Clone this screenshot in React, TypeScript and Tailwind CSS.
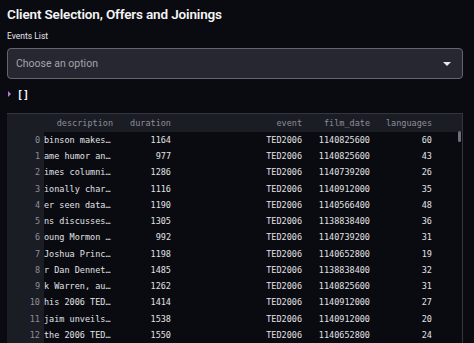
import React from 'react';

const rows: [string, string, string, string, string][] = [
  ['binson makes…', '1164', 'TED2006', '1140825600', '60'],
  ['ame humor an…', '977', 'TED2006', '1140825600', '43'],
  ['imes columni…', '1286', 'TED2006', '1140739200', '26'],
  ['ionally char…', '1116', 'TED2006', '1140912000', '35'],
  ['er seen data…', '1190', 'TED2006', '1140566400', '48'],
  ['ns discusses…', '1305', 'TED2006', '1138838400', '36'],
  ['oung Mormon …', '992', 'TED2006', '1140739200', '31'],
  ['Joshua Princ…', '1198', 'TED2006', '1140652800', '19'],
  ['r Dan Dennet…', '1485', 'TED2006', '1138838400', '32'],
  ['k Warren, au…', '1262', 'TED2006', '1140825600', '31'],
  ['his 2006 TED…', '1414', 'TED2006', '1140912000', '27'],
  ['jaim unveils…', '1538', 'TED2006', '1140912000', '20'],
  ['the 2006 TED…', '1550', 'TED2006', '1140652800', '24'],
];

const cols = 'grid grid-cols-[37px_75px_58px_131px_68px_62px_1fr]';

function App() {
  return (
    <div className="w-[474px] h-[343px] overflow-hidden bg-[#0a0b10] text-white font-['Roboto',sans-serif] px-[7px] pt-[4px]">
      <h1 className="text-[13.5px] font-semibold leading-[20px] tracking-[-0.15px] text-[#f5f5f7]">
        Client Selection, Offers and Joinings
      </h1>
      <div className="mt-[5px] text-[8.5px] leading-[14px] text-[#e6e6ea]">Events List</div>
      <div className="mt-[5px] w-[456px] h-[31px] rounded-[4px] border border-[#65666d] bg-[#262730] flex items-center justify-between pl-[8px] pr-[11px]">
        <span className="text-[10.5px] text-[#a3a4ab]">Choose an option</span>
        <span className="w-0 h-0 border-l-[4px] border-r-[4px] border-t-[4px] border-l-transparent border-r-transparent border-t-[#e8e8ec]" />
      </div>
      <div className="mt-[8px] h-[14px] flex items-center gap-[6px] pl-[1px]">
        <span className="w-0 h-0 border-t-[3px] border-b-[3px] border-l-[3px] border-t-transparent border-b-transparent border-l-[#b07bd8]" />
        <span className="font-['DejaVu_Sans_Mono',monospace] text-[10px] font-bold text-white">[]</span>
      </div>
      <div className="relative mt-[12px] w-[456px] border-t border-r border-[#34353d] font-['DejaVu_Sans_Mono',monospace] text-[8.5px]">
        <div className={`${cols} h-[18px] items-center bg-[#1b1d25] text-[#8d8f98]`}>
          <div />
          <div className="text-right pr-[6px]">description</div>
          <div className="text-right pr-[6px]">duration</div>
          <div className="text-right pr-[6px]">event</div>
          <div className="text-right pr-[6px]">film_date</div>
          <div className="text-right pr-[6px]">languages</div>
          <div />
        </div>
        {rows.map((r, i) => (
          <div key={i} className={`${cols} h-[16.25px] items-center text-[#e2e2e6]`}>
            <div className="h-full bg-[#1b1d25] pr-[4px] text-[#8d8f98] flex items-center justify-end">{i}</div>
            <div className="overflow-hidden whitespace-nowrap">{r[0]}</div>
            <div className="text-right pr-[6px]">{r[1]}</div>
            <div className="text-right pr-[6px]">{r[2]}</div>
            <div className="text-right pr-[6px]">{r[3]}</div>
            <div className="text-right pr-[6px]">{r[4]}</div>
            <div />
          </div>
        ))}
        <div className="absolute right-[1px] top-[17px] w-[3px] h-[11px] rounded-[2px] bg-[#6f7077]" />
      </div>
    </div>
  );
}

export default App;
